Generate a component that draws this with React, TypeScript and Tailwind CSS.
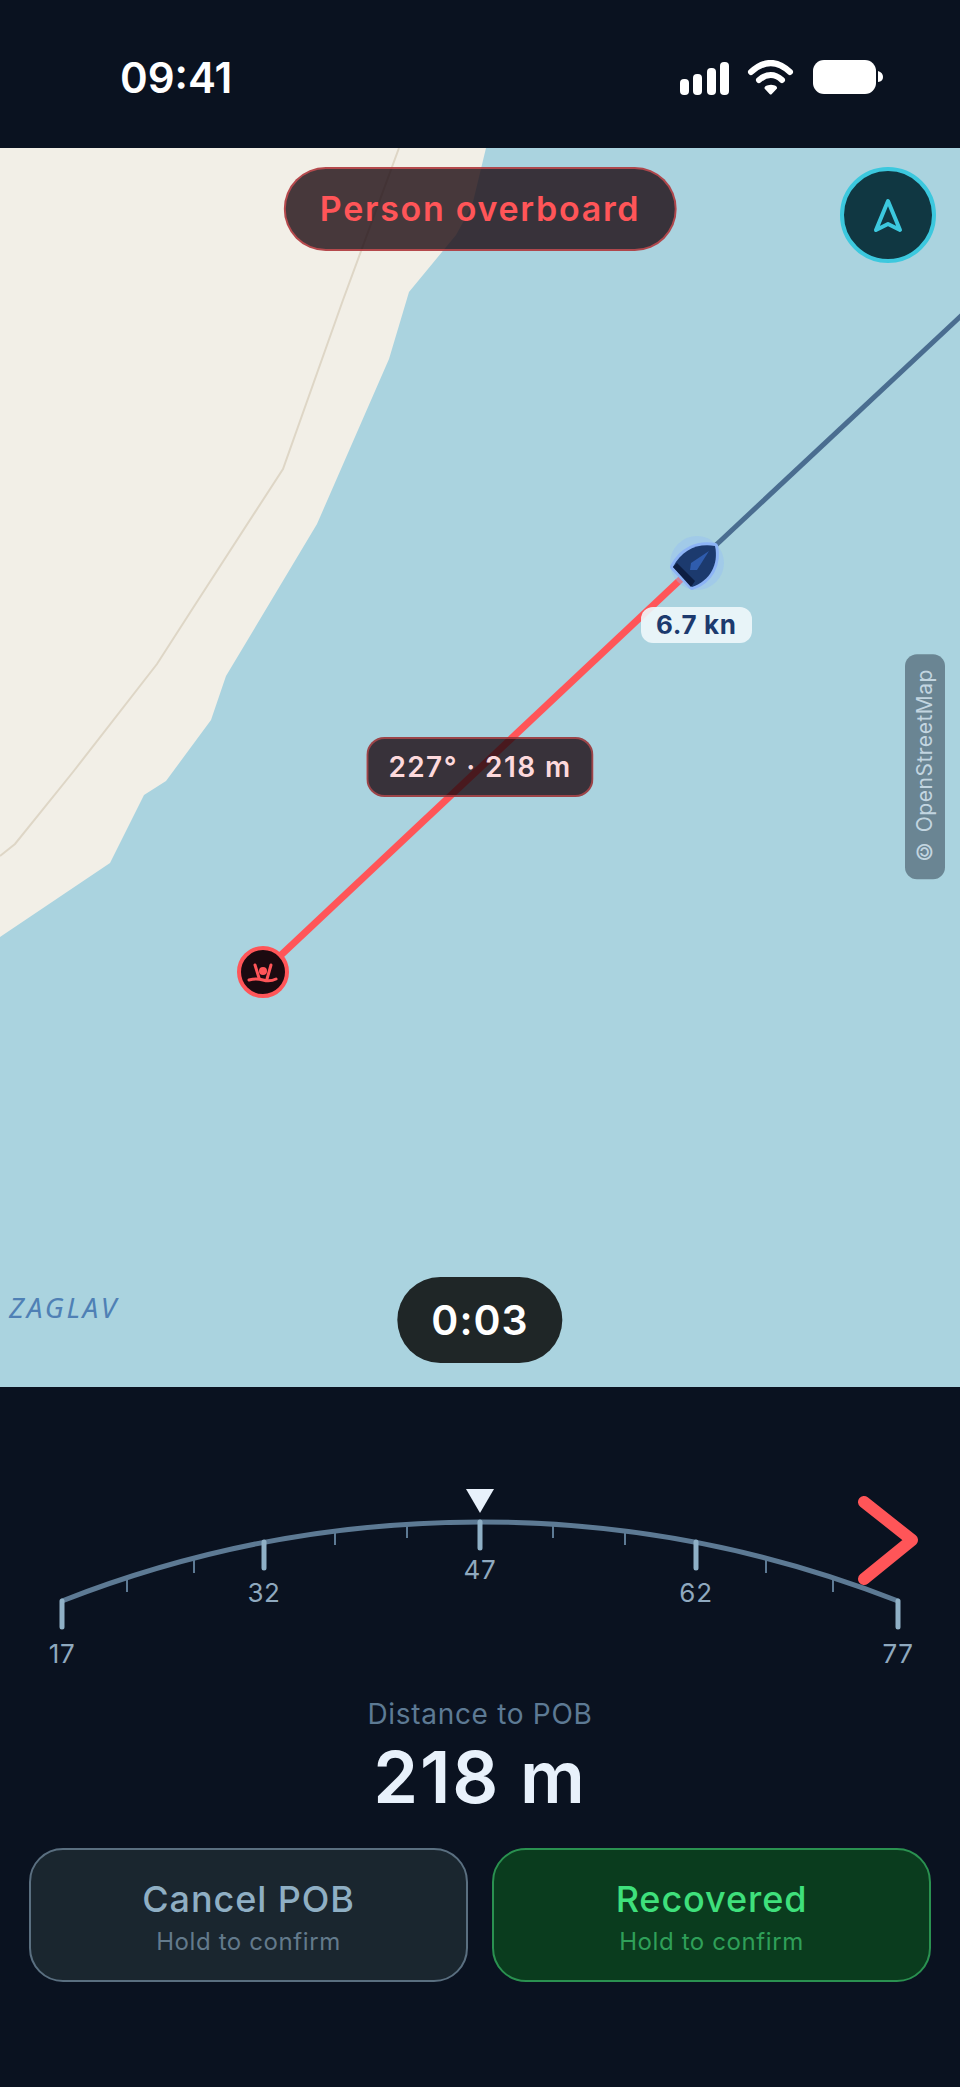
import React from "react";

interface Tick {
  x: number;
  y: number;
  label?: string;
  labelY?: number;
}

const ticks: Tick[] = [
  { x: 62, y: 121, label: "17", labelY: 183 },
  { x: 127, y: 98 },
  { x: 194, y: 79 },
  { x: 264, y: 62, label: "32", labelY: 122 },
  { x: 335, y: 51 },
  { x: 407, y: 44 },
  { x: 480, y: 42, label: "47", labelY: 99 },
  { x: 553, y: 44 },
  { x: 625, y: 51 },
  { x: 696, y: 62, label: "62", labelY: 122 },
  { x: 766, y: 79 },
  { x: 833, y: 98 },
  { x: 898, y: 121, label: "77", labelY: 183 },
];

function StatusBar() {
  return (
    <header className="flex h-[148px] shrink-0 items-center justify-between pt-2 pl-[120px] pr-[76px]">
      <span className="text-[42px] leading-[48px] font-semibold text-white">09:41</span>
      <svg className="h-9 w-[204px]" viewBox="680 60 204 36" fill="white" role="img" aria-label="Signal, Wi-Fi and battery">
        <rect x="680" y="79" width="9" height="16" rx="4" />
        <rect x="693" y="74" width="9" height="21" rx="4" />
        <rect x="707" y="68" width="9" height="27" rx="4" />
        <rect x="720" y="62" width="9" height="33" rx="4" />
        <path d="M751 72Q771 54 790 72" fill="none" stroke="white" strokeWidth="6" strokeLinecap="round" />
        <path d="M759 80Q771 70 782 80" fill="none" stroke="white" strokeWidth="6" strokeLinecap="round" />
        <path d="M764.500 88.500Q764 86 768 85.200Q771 84.500 774 85.200Q777.500 86 777 88.500L771.800 94Q770.700 95 769.600 94Z" />
        <rect x="813" y="60" width="63" height="34" rx="11" />
        <path d="M878 71Q883 72.500 883 77Q883 81.500 878 82Z" />
      </svg>
    </header>
  );
}

function Chart() {
  return (
    <svg className="absolute inset-0 h-full w-full" viewBox="0 148 960 1239" preserveAspectRatio="xMidYMid slice" role="img" aria-label="Chart around Zaglav">
      <path
        d="M0 148H486L472 206L456 235L409 292L389 359L317 524L226 676L211 720L166 781L144 795L110 863L0 937Z"
        fill="#f2efe7"
      />
      <path
        d="M399 148L343 300L283 469L193 608L157 664L73 772L15 844L0 856"
        fill="none"
        stroke="#ded6c6"
        strokeWidth="2"
      />
      <text x="9" y="1318" fontSize="28" fontStyle="italic" fill="#4f80b5" className="font-['Noto_Sans',sans-serif] tracking-widest">ZAGLAV</text>

      {/* Heading line */}
      <path d="M700 560L962 315" stroke="#4a6d90" strokeWidth="5" />
      {/* Line back to the casualty */}
      <path d="M263 972L697 564" stroke="#ff5558" strokeWidth="7" />

      {/* Own vessel */}
      <circle cx="697" cy="563" r="27" fill="#93bff5" fillOpacity="0.4" />
      <path d="M673 567C682 550 697 543 715 546C719 564 710 581 692 587Z" fill="#8db4f6" stroke="#8db4f6" strokeWidth="6" strokeLinejoin="round" />
      <path d="M673 567C682 550 697 543 715 546C719 564 710 581 692 587Z" fill="#1c3a6e" />
      <path d="M677 563L695 581L691 587L673 567Z" fill="#0d1e42" />
      <path d="M709 551L691 563L690 570L697 570Z" fill="#2f5cad" />

      {/* Person overboard */}
      <circle cx="263" cy="972" r="24" fill="#1b0a10" stroke="#ff5558" strokeWidth="4" />
      <g fill="none" stroke="#ff5558" strokeWidth="3" strokeLinecap="round" strokeLinejoin="round">
        <path d="M249 980Q256 978 263 980T276 979" />
        <path d="M255 965L259 978" />
        <path d="M271 965L267 979" />
      </g>
      <circle cx="263" cy="971" r="4" fill="#ff5558" />
    </svg>
  );
}

function MapView() {
  return (
    <main className="relative min-h-[900px] flex-1 overflow-hidden bg-[#aad3df]">
      <Chart />

      <h1 className="absolute top-[19px] left-1/2 -translate-x-1/2 rounded-full border-2 border-[#ff5558]/60 bg-[#1b0a10]/80 px-[34px] py-5 text-[34px] leading-10 font-semibold tracking-wider whitespace-nowrap text-[#ff5558]">
        Person overboard
      </h1>

      <button
        type="button"
        aria-label="Follow heading"
        className="absolute top-[19px] right-6 flex size-24 items-center justify-center rounded-full border-4 border-[#3cc8de] bg-[#103742]"
      >
        <svg className="h-9 w-8" viewBox="0 0 32 36" fill="none" stroke="#3cc8de" strokeWidth="4" strokeLinejoin="round">
          <path d="M16 4L28 33L16 27L4 33Z" />
        </svg>
      </button>

      <span className="absolute top-[459px] left-[641px] rounded-xl bg-[#eef7fb]/90 px-[15px] text-[26px] leading-9 font-bold tracking-wide whitespace-nowrap text-[#1c3a6e]">
        6.7 kn
      </span>

      <span className="absolute top-[589px] left-1/2 -translate-x-1/2 rounded-[18px] border-2 border-[#ff5558]/50 bg-[#1b0a10]/80 px-5 py-2 text-[28px] leading-10 font-semibold tracking-wider whitespace-nowrap text-[#fdd9dc]">
        227° · 218 m
      </span>

      {/* Vertical text, so px pads top and bottom here */}
      <a
        href="#copyright"
        className="absolute top-[506px] right-[15px] rotate-180 rounded-xl bg-[#0b1220]/40 px-[15px] py-[6px] text-[21px] leading-7 tracking-wide whitespace-nowrap text-[#c2d5e0] [writing-mode:vertical-rl]"
      >
        © OpenStreetMap
      </a>

      <span className="absolute bottom-6 left-1/2 -translate-x-1/2 rounded-full bg-[#1f2627] px-[34px] py-[19px] text-[41px] leading-[48px] font-semibold tracking-wide text-white">
        0:03
      </span>
    </main>
  );
}

function HeadingGauge() {
  return (
    <svg className="w-full" viewBox="0 0 960 190" role="img" aria-label="Heading 47 degrees, turn right">
      <path d="M62 121A1145 1145 0 0 1 898 121" fill="none" stroke="#5d7a94" strokeWidth="5" />
      {ticks.map((t) => (
        <g key={t.x}>
          <path
            d={t.label ? `M${t.x} ${t.y}v26` : `M${t.x} ${t.y}v14`}
            stroke={t.label ? "#8fb0c6" : "#5d7a94"}
            strokeWidth={t.label ? 5 : 2}
            strokeLinecap={t.label ? "round" : "butt"}
          />
          {t.label && (
            <text x={t.x} y={t.labelY} textAnchor="middle" fontSize="26" fill="#8fa9bf" className="tracking-wide">
              {t.label}
            </text>
          )}
        </g>
      ))}
      <path d="M466 9H494L480 33Z" fill="#e8f1fb" />
      <path d="M864 22L912 60L864 99" fill="none" stroke="#ff5558" strokeWidth="12" strokeLinecap="round" strokeLinejoin="round" />
    </svg>
  );
}

export default function App() {
  return (
    <div className="flex min-h-screen flex-col bg-[#0a1220] font-['Inter',sans-serif]">
      <StatusBar />
      <MapView />

      <section className="flex shrink-0 flex-col pt-[93px] pb-[105px]">
        <HeadingGauge />

        <div className="mt-6 flex flex-col items-center">
          <p className="text-[28px] leading-10 tracking-wide text-[#5d7a94]">Distance to POB</p>
          <p className="text-[72px] leading-[86px] font-semibold tracking-wide text-[#e8f1fb]">218 m</p>
        </div>

        <div className="mt-7 grid grid-cols-2 gap-6 px-[29px]">
          <button type="button" className="flex flex-col items-center rounded-[34px] border-2 border-[#5a6f80] bg-[#1a262f] pt-6 pb-5">
            <span className="text-[36px] leading-[50px] font-medium tracking-wide text-[#8fafc4]">Cancel POB</span>
            <span className="text-[24px] leading-9 tracking-wide text-[#637a8c]">Hold to confirm</span>
          </button>
          <button type="button" className="flex flex-col items-center rounded-[34px] border-2 border-[#2a9150] bg-[#0a3c1e] pt-6 pb-5">
            <span className="text-[36px] leading-[50px] font-medium tracking-wide text-[#3fe07c]">Recovered</span>
            <span className="text-[24px] leading-9 tracking-wide text-[#2fa059]">Hold to confirm</span>
          </button>
        </div>
      </section>
    </div>
  );
}
